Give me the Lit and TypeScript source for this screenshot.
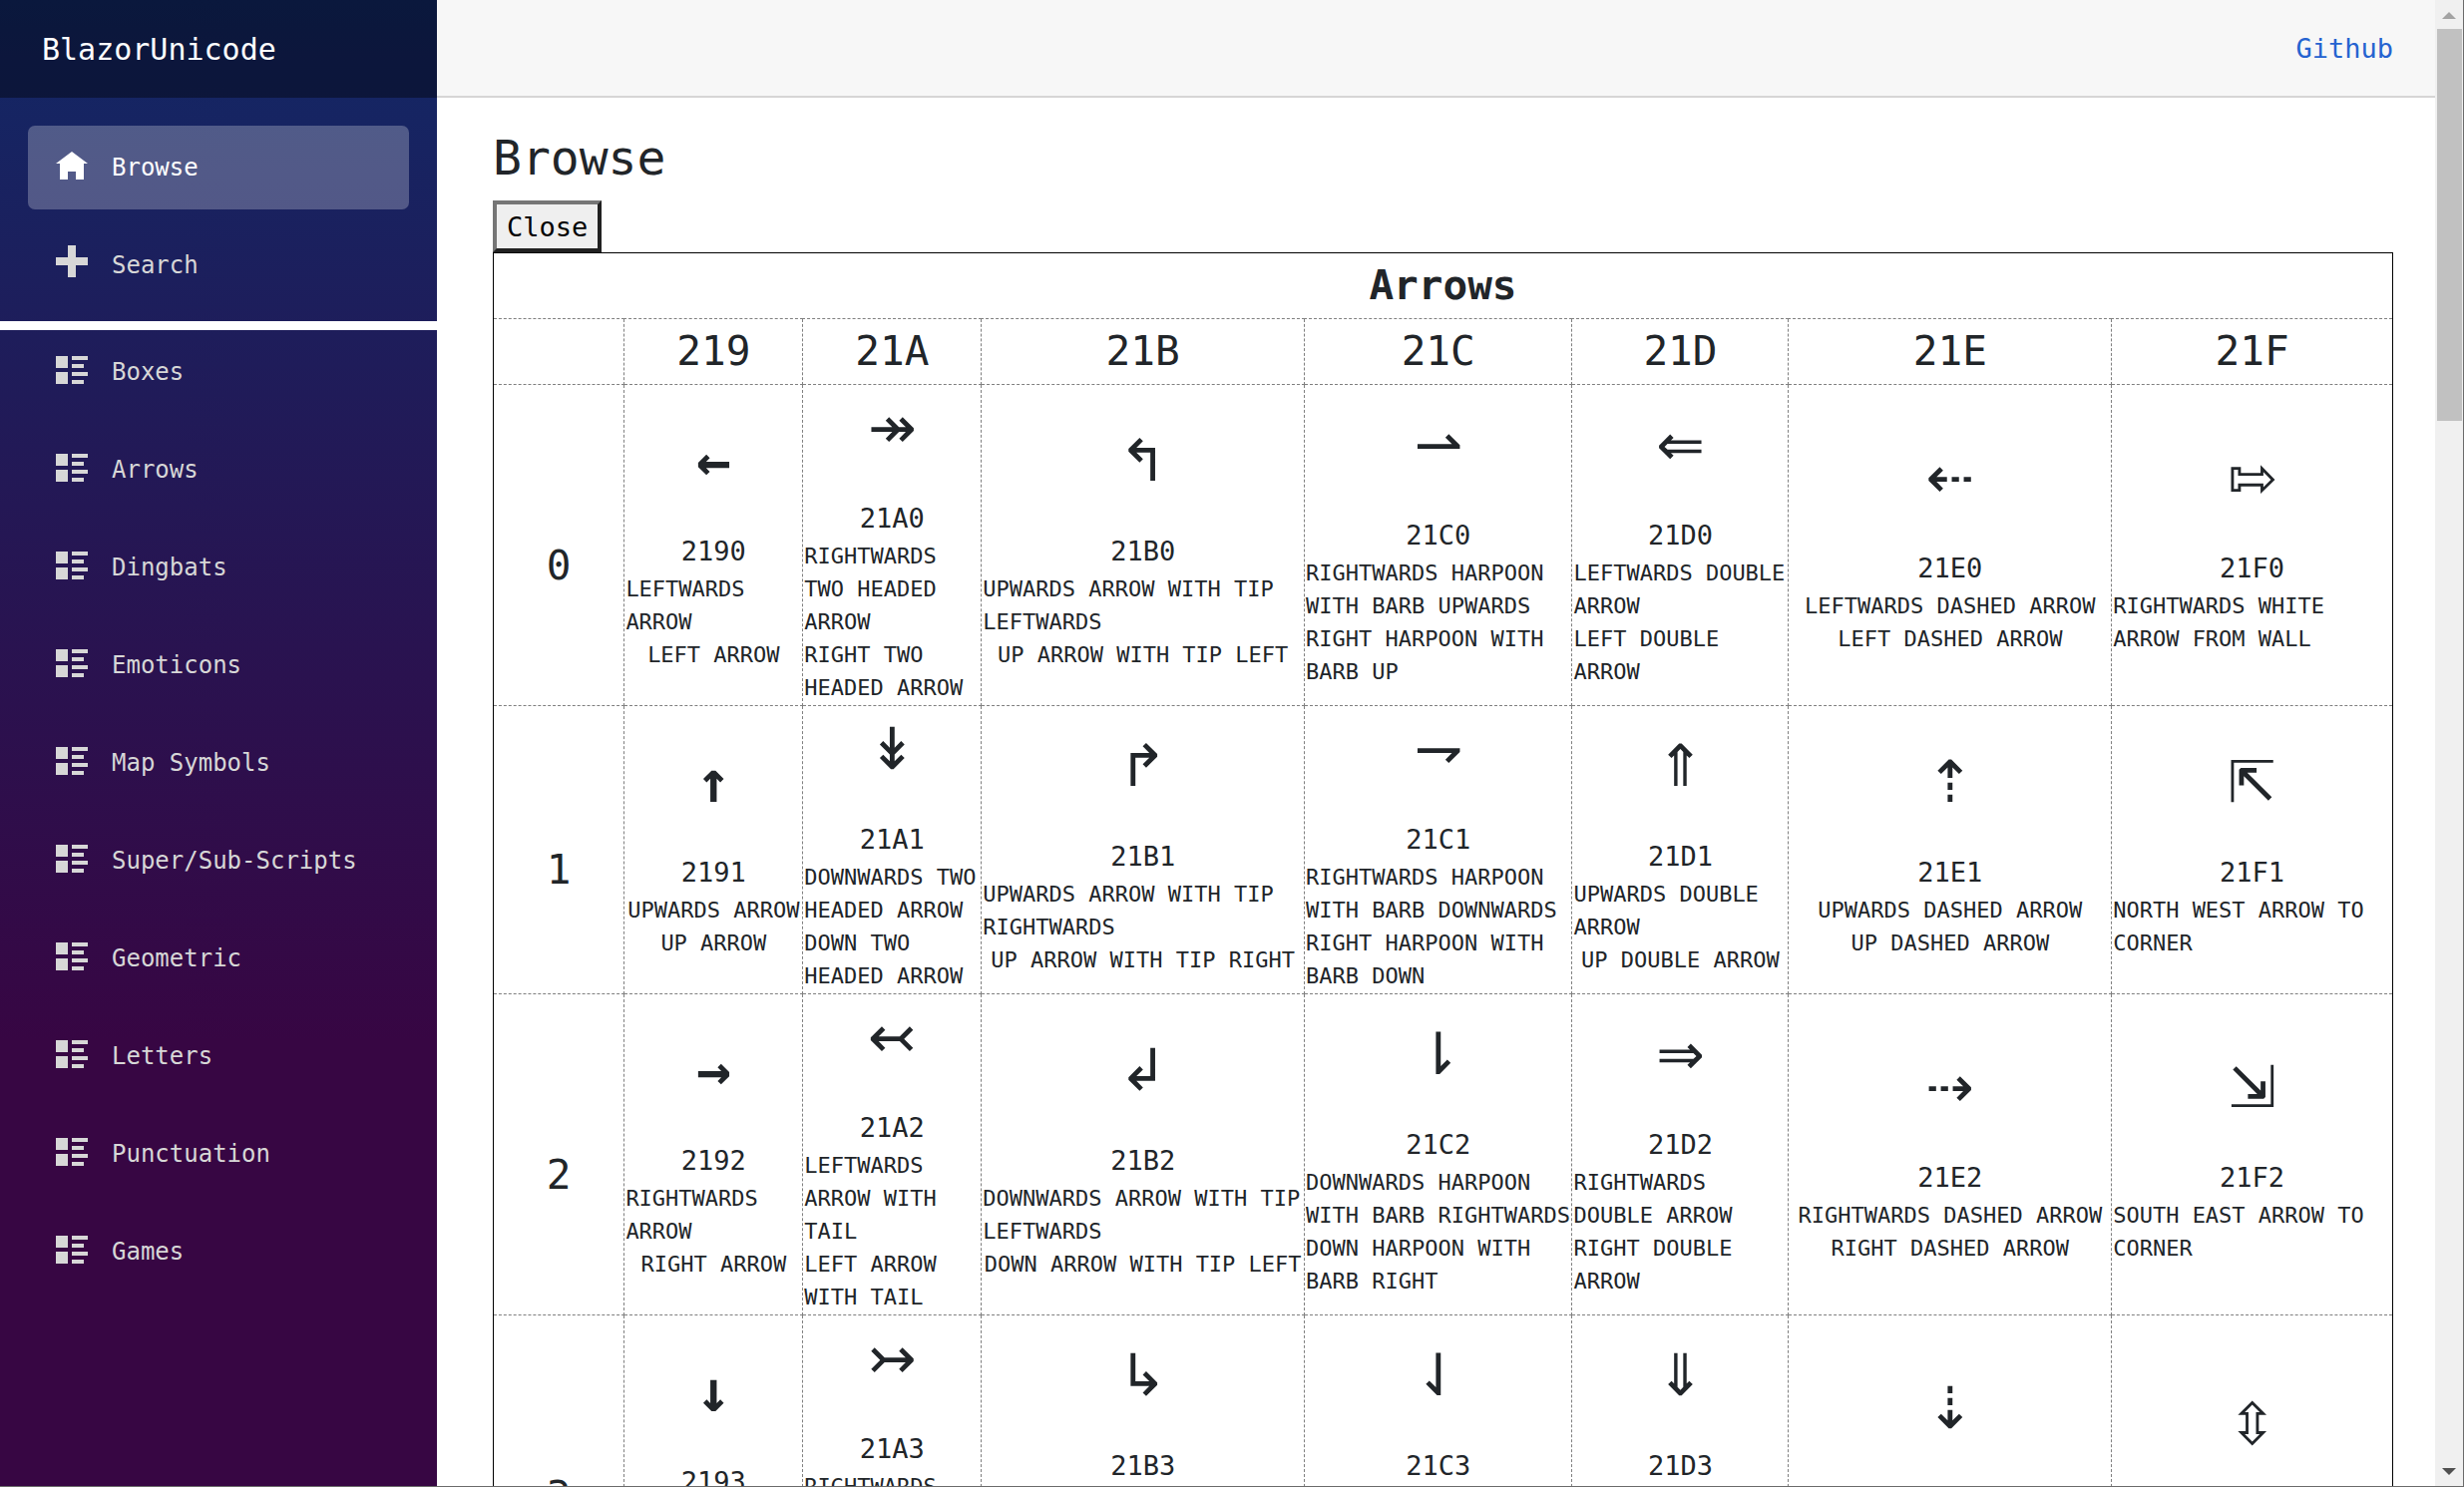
import { LitElement, html, css, svg } from "lit";
import { customElement, property } from "lit/decorators.js";

interface Glyph {
  code: string;
  names: string[];
  mono?: boolean;
}

interface NavItem {
  label: string;
  icon: string;
  active?: boolean;
}

const ICONS: Record<string, string> = {
  home: "M4 1l-4 3h1v4h2v-2h2v2h2v-4h1z",
  plus: "M3 0v3h-3v2h3v3h2v-3h3v-2h-3v-3z",
  list: "M0 1v3h3v-3zM4 1v1h4v-1zM4 3v1h3v-1zM0 5v3h3v-3zM4 5v1h4v-1zM4 7v1h3v-1z",
};

const MAIN_NAV: NavItem[] = [
  { label: "Browse", icon: "home", active: true },
  { label: "Search", icon: "plus" },
];

const BLOCK_NAV: NavItem[] = [
  "Boxes",
  "Arrows",
  "Dingbats",
  "Emoticons",
  "Map Symbols",
  "Super/Sub-Scripts",
  "Geometric",
  "Letters",
  "Punctuation",
  "Games",
].map((label) => ({ label, icon: "list" }));

const COLUMNS = ["219", "21A", "21B", "21C", "21D", "21E", "21F"];

const ROWS: Glyph[][] = [
  [
    { code: "2190", names: ["LEFTWARDS ARROW", "LEFT ARROW"], mono: true },
    { code: "21A0", names: ["RIGHTWARDS TWO HEADED ARROW", "RIGHT TWO HEADED ARROW"] },
    { code: "21B0", names: ["UPWARDS ARROW WITH TIP LEFTWARDS", "UP ARROW WITH TIP LEFT"] },
    { code: "21C0", names: ["RIGHTWARDS HARPOON WITH BARB UPWARDS", "RIGHT HARPOON WITH BARB UP"] },
    { code: "21D0", names: ["LEFTWARDS DOUBLE ARROW", "LEFT DOUBLE ARROW"] },
    { code: "21E0", names: ["LEFTWARDS DASHED ARROW", "LEFT DASHED ARROW"] },
    { code: "21F0", names: ["RIGHTWARDS WHITE ARROW FROM WALL"] },
  ],
  [
    { code: "2191", names: ["UPWARDS ARROW", "UP ARROW"], mono: true },
    { code: "21A1", names: ["DOWNWARDS TWO HEADED ARROW", "DOWN TWO HEADED ARROW"] },
    { code: "21B1", names: ["UPWARDS ARROW WITH TIP RIGHTWARDS", "UP ARROW WITH TIP RIGHT"] },
    { code: "21C1", names: ["RIGHTWARDS HARPOON WITH BARB DOWNWARDS", "RIGHT HARPOON WITH BARB DOWN"] },
    { code: "21D1", names: ["UPWARDS DOUBLE ARROW", "UP DOUBLE ARROW"] },
    { code: "21E1", names: ["UPWARDS DASHED ARROW", "UP DASHED ARROW"] },
    { code: "21F1", names: ["NORTH WEST ARROW TO CORNER"] },
  ],
  [
    { code: "2192", names: ["RIGHTWARDS ARROW", "RIGHT ARROW"], mono: true },
    { code: "21A2", names: ["LEFTWARDS ARROW WITH TAIL", "LEFT ARROW WITH TAIL"] },
    { code: "21B2", names: ["DOWNWARDS ARROW WITH TIP LEFTWARDS", "DOWN ARROW WITH TIP LEFT"] },
    { code: "21C2", names: ["DOWNWARDS HARPOON WITH BARB RIGHTWARDS", "DOWN HARPOON WITH BARB RIGHT"] },
    { code: "21D2", names: ["RIGHTWARDS DOUBLE ARROW", "RIGHT DOUBLE ARROW"] },
    { code: "21E2", names: ["RIGHTWARDS DASHED ARROW", "RIGHT DASHED ARROW"] },
    { code: "21F2", names: ["SOUTH EAST ARROW TO CORNER"] },
  ],
  [
    { code: "2193", names: ["DOWNWARDS ARROW", "DOWN ARROW"], mono: true },
    { code: "21A3", names: ["RIGHTWARDS ARROW WITH TAIL", "RIGHT ARROW WITH TAIL"] },
    { code: "21B3", names: ["DOWNWARDS ARROW WITH TIP RIGHTWARDS", "DOWN ARROW WITH TIP RIGHT"] },
    { code: "21C3", names: ["DOWNWARDS HARPOON WITH BARB LEFTWARDS", "DOWN HARPOON WITH BARB LEFT"] },
    { code: "21D3", names: ["DOWNWARDS DOUBLE ARROW", "DOWN DOUBLE ARROW"] },
    { code: "21E3", names: ["DOWNWARDS DASHED ARROW", "DOWN DASHED ARROW"] },
    { code: "21F3", names: ["UP DOWN WHITE ARROW"] },
  ],
];

@customElement("nav-menu")
export class NavMenu extends LitElement {
  static styles = css`
    :host {
      display: flex;
      flex-direction: column;
      background-image: linear-gradient(180deg, #122866 0%, #370643 70%);
    }
    .brand {
      display: flex;
      align-items: center;
      height: 98px;
      padding-left: 42px;
      background: rgba(0, 0, 0, 0.4);
    }
    .brand-link {
      color: #fff;
      font-size: 30px;
      text-decoration: none;
    }
    .group {
      display: flex;
      flex-direction: column;
      gap: 14px;
      margin: 0;
      padding: 0 28px 14px;
      list-style: none;
    }
    .group.first {
      padding-top: 28px;
    }
    .divider {
      height: 9px;
      margin: 0;
      border: 0;
      background: #fff;
    }
    .link {
      display: flex;
      align-items: center;
      gap: 24px;
      height: 84px;
      padding: 0 28px;
      border-radius: 7px;
      color: #d7d7d7;
      font-size: 24px;
      text-decoration: none;
    }
    .link.active {
      background: rgba(255, 255, 255, 0.25);
      color: #fff;
    }
    .icon {
      width: 32px;
      height: 32px;
      margin-bottom: 8px;
      fill: currentColor;
    }
  `;

  private renderItem(item: NavItem) {
    return html`<li>
      <a class="link ${item.active ? "active" : ""}" href="#">
        <svg class="icon" viewBox="0 0 8 8" aria-hidden="true">
          ${svg`<path d=${ICONS[item.icon]}></path>`}
        </svg>
        <span>${item.label}</span>
      </a>
    </li>`;
  }

  render() {
    return html`
      <div class="brand"><a class="brand-link" href="#">BlazorUnicode</a></div>
      <ul class="group first">
        ${MAIN_NAV.map((i) => this.renderItem(i))}
      </ul>
      <hr class="divider" />
      <ul class="group">
        ${BLOCK_NAV.map((i) => this.renderItem(i))}
      </ul>
    `;
  }
}

@customElement("glyph-cell")
export class GlyphCell extends LitElement {
  @property({ attribute: false }) glyph!: Glyph;

  static styles = css`
    :host {
      display: flex;
      flex-direction: column;
      align-items: center;
    }
    .symbol {
      margin-bottom: 28px;
      font-family: "DejaVu Sans", sans-serif;
      font-size: 58px;
      line-height: 84px;
    }
    .symbol.mono {
      font-family: "DejaVu Sans Mono", monospace;
      font-weight: 700;
    }
    .code {
      line-height: 42px;
    }
    .name {
      font-size: 22px;
      line-height: 33px;
    }
  `;

  render() {
    const { code, names, mono } = this.glyph;
    return html`
      <span class="symbol ${mono ? "mono" : ""}">${String.fromCodePoint(parseInt(code, 16))}</span>
      <span class="code">${code}</span>
      ${names.map((n) => html`<span class="name">${n}</span>`)}
    `;
  }
}

@customElement("app-root")
export class AppRoot extends LitElement {
  static styles = css`
    :host {
      display: flex;
      box-sizing: border-box;
      height: 100vh;
      overflow: hidden;
      border-right: 1px solid #6b6b6b;
      border-bottom: 1px solid #6b6b6b;
      background: #fff;
      color: #212529;
      font-family: "DejaVu Sans Mono", monospace;
      font-size: 27px;
    }
    .sidebar {
      flex: 0 0 438px;
    }
    .page {
      flex: 1;
      min-width: 0;
    }
    .topbar {
      display: flex;
      align-items: center;
      justify-content: flex-end;
      box-sizing: border-box;
      height: 98px;
      padding-right: 42px;
      border-bottom: 2px solid #d6d5d5;
      background: #f7f7f7;
    }
    .github {
      color: #2563d0;
      text-decoration: none;
    }
    .content {
      padding: 31px 42px 0 56px;
    }
    .title {
      margin: 0 0 14px;
      font-size: 48px;
      font-weight: 400;
      line-height: 58px;
    }
    .close {
      display: block;
      height: 52px;
      padding: 0 10px;
      border: 4px solid;
      border-color: #767676 #212121 #212121 #767676;
      border-radius: 0;
      background: #efefef;
      color: #000;
      font: inherit;
    }
    .chart {
      width: 100%;
      table-layout: fixed;
      border-collapse: collapse;
      border: 1px solid #000;
    }
    .cell,
    .head {
      padding: 1px;
      border: 1px dashed #808080;
    }
    .head {
      font-size: 41px;
      font-weight: 400;
      line-height: 63px;
      text-align: center;
    }
    .head.caption {
      font-weight: 700;
    }
    .head.row {
      padding-top: 42px;
    }
    .cell {
      vertical-align: middle;
    }
    .c0 { width: 6.9%; }
    .c1, .c2 { width: 9.4%; }
    .c3, .c6 { width: 17%; }
    .c4 { width: 14.1%; }
    .c5 { width: 11.4%; }
    .c7 { width: 14.8%; }
    .scrollbar {
      display: flex;
      flex-direction: column;
      align-items: center;
      flex: 0 0 28px;
      background: #f0f0f0;
    }
    .arrow {
      width: 14px;
      height: 29px;
      fill: #a3a3a3;
    }
    .arrow.down {
      margin-top: auto;
      fill: #505050;
    }
    .thumb {
      width: 25px;
      flex: 0 0 26.4%;
      background: #c1c1c1;
    }
  `;

  render() {
    return html`
      <nav-menu class="sidebar"></nav-menu>
      <main class="page">
        <div class="topbar"><a class="github" href="#">Github</a></div>
        <div class="content">
          <h1 class="title">Browse</h1>
          <button class="close" type="button">Close</button>
          <table class="chart">
            <colgroup>
              ${["c0", "c1", "c2", "c3", "c4", "c5", "c6", "c7"].map((c) => html`<col class=${c} />`)}
            </colgroup>
            <thead>
              <tr>
                <th class="head caption" colspan="8">Arrows</th>
              </tr>
              <tr>
                <td class="head"></td>
                ${COLUMNS.map((c) => html`<th class="head" scope="col">${c}</th>`)}
              </tr>
            </thead>
            <tbody>
              ${ROWS.map(
                (row, i) => html`<tr>
                  <th class="head row" scope="row">${i.toString(16).toUpperCase()}</th>
                  ${row.map((g) => html`<td class="cell"><glyph-cell .glyph=${g}></glyph-cell></td>`)}
                </tr>`
              )}
            </tbody>
          </table>
        </div>
      </main>
      <div class="scrollbar" aria-hidden="true">
        <svg class="arrow" viewBox="0 0 14 29"><path d="M7 12l7 7H0z"></path></svg>
        <div class="thumb"></div>
        <svg class="arrow down" viewBox="0 0 14 29"><path d="M7 18l7-7H0z"></path></svg>
      </div>
    `;
  }
}
